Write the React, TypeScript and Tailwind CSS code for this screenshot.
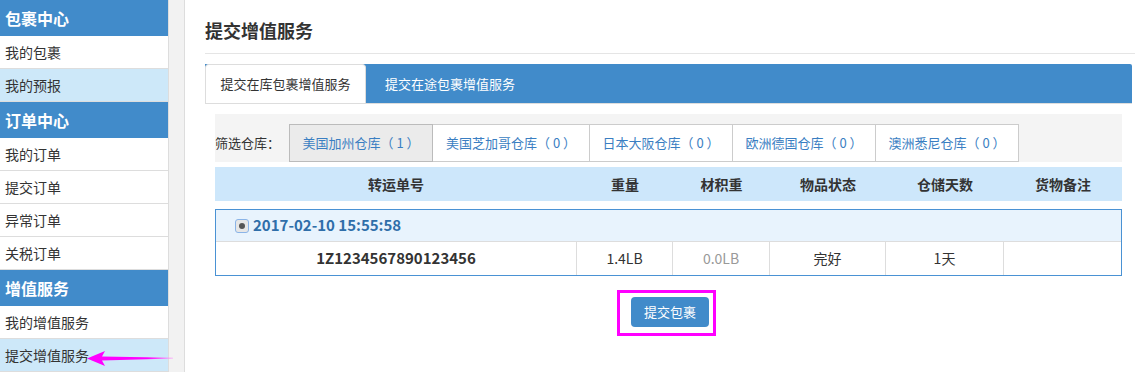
const font = "font-['Microsoft_YaHei','Noto_Sans_CJK_SC',sans-serif]";

const menu = [
  { title: "包裹中心", items: ["我的包裹", "我的预报"], active: "我的预报" },
  { title: "订单中心", items: ["我的订单", "提交订单", "异常订单", "关税订单"], active: "" },
  { title: "增值服务", items: ["我的增值服务", "提交增值服务"], active: "提交增值服务" },
];

const warehouses = [
  { name: "美国加州仓库（ 1 ）", w: "w-[144px]", active: true },
  { name: "美国芝加哥仓库（ 0 ）", w: "w-[158px]", active: false },
  { name: "日本大阪仓库（ 0 ）", w: "w-[144px]", active: false },
  { name: "欧洲德国仓库（ 0 ）", w: "w-[144px]", active: false },
  { name: "澳洲悉尼仓库（ 0 ）", w: "w-[144px]", active: false },
];

const columns = [
  { label: "转运单号", w: "w-[362px]" },
  { label: "重量", w: "w-[96px]" },
  { label: "材积重", w: "w-[97px]" },
  { label: "物品状态", w: "w-[116px]" },
  { label: "仓储天数", w: "w-[118px]" },
  { label: "货物备注", w: "w-[118px]" },
];

const Sidebar = () => (
  <div className="w-[168px] shrink-0 flex flex-col">
    {menu.map((group) => (
      <div key={group.title}>
        <div className="h-[36px] bg-[#418bca] text-white text-[16px] font-bold leading-[36px] pl-[5px]">
          {group.title}
        </div>
        {group.items.map((item) => (
          <div
            key={item}
            className={`h-[33px] leading-[32px] text-[14px] text-[#333] pl-[5px] border-b border-[#ddd] ${
              item === group.active ? "bg-[#cde8f9]" : "bg-white"
            }`}
          >
            {item}
          </div>
        ))}
      </div>
    ))}
  </div>
);

const App = () => {
  return (
    <div className={`relative flex h-[372px] w-[1135px] overflow-hidden bg-white ${font}`}>
      <Sidebar />
      <div className="w-[17px] shrink-0 bg-[#f2f2f2] border-l border-r border-[#ddd]" />

      <div className="flex-1 pl-[20px] pr-[3px]">
        <h2 className="text-[18px] font-bold text-[#333] h-[54px] leading-[60px] border-b border-[#e5e5e5] -mr-[3px]">
          提交增值服务
        </h2>

        <div className="mt-[10px] flex h-[40px] bg-[#418bca] rounded-tr-[2px] border-b border-[#ddd]">
          <div className="w-[161px] bg-white border border-b-0 border-[#ddd] rounded-t-[4px] text-[13px] text-[#333] flex items-center justify-center">
            提交在库包裹增值服务
          </div>
          <div className="w-[168px] text-[13px] text-white flex items-center justify-center">
            提交在途包裹增值服务
          </div>
        </div>

        <div className="px-[10px] pt-[10px]">
          <div className="h-[48px] bg-[#f4f4f4] flex items-end">
            <div className="h-[38px] w-[74px] text-[13px] text-[#333] flex items-center">筛选仓库：</div>
            {warehouses.map((w, i) => (
              <div
                key={w.name}
                className={`h-[38px] ${w.w} text-[13px] text-[#3a7ec2] flex items-center justify-center border whitespace-pre ${
                  i > 0 ? "-ml-px" : ""
                } ${w.active ? "bg-[#ebebeb] border-[#bbb] relative z-10" : "bg-white border-[#ccc]"}`}
              >
                {w.name}
              </div>
            ))}
          </div>

          <div className="mt-[5px] h-[34px] bg-[#cde7fb] flex">
            {columns.map((c) => (
              <div key={c.label} className={`${c.w} text-[14px] font-bold text-[#333] flex items-center justify-center`}>
                {c.label}
              </div>
            ))}
          </div>

          <div className="mt-[8px] border border-[#4a92d4]">
            <div className="h-[32px] bg-[#e8f3fd] border-b border-[#ddd] flex items-center pl-[19px] gap-[4px]">
              <div className="w-[14px] h-[14px] rounded-[3px] border border-[#8ab4e8] bg-[#e6e6e6] flex items-center justify-center">
                <div className="w-[6px] h-[6px] rounded-full bg-[#555]" />
              </div>
              <span className="text-[15px] font-bold text-[#2f6ea9]">2017-02-10 15:55:58</span>
            </div>
            <div className="h-[33px] flex text-[14px] text-[#333]">
              <div className="w-[361px] flex items-center justify-center font-bold text-[15px] border-r border-[#ddd]">
                1Z1234567890123456
              </div>
              <div className="w-[96px] flex items-center justify-center border-r border-[#ddd]">1.4LB</div>
              <div className="w-[97px] flex items-center justify-center border-r border-[#ddd] text-[#999]">0.0LB</div>
              <div className="w-[116px] flex items-center justify-center border-r border-[#ddd]">完好</div>
              <div className="w-[118px] flex items-center justify-center border-r border-[#ddd]">1天</div>
              <div className="flex-1" />
            </div>
          </div>

          <div className="mt-[14px] flex justify-center">
            <div className="border-[3px] border-[#f0f] pl-[11px] pr-[4px] pt-[4px] pb-[6px] ml-[-4px]">
              <button className="w-[78px] h-[30px] rounded-[4px] bg-[#418bca] text-white text-[13px]">提交包裹</button>
            </div>
          </div>
        </div>
      </div>

      <svg className="absolute left-[87px] top-[350px]" width="88" height="17" viewBox="0 0 88 17">
        <defs>
          <linearGradient id="arrowFade" x1="0" x2="1" y1="0" y2="0">
            <stop offset="0" stopColor="#f0f" />
            <stop offset="0.7" stopColor="#f0f" />
            <stop offset="1" stopColor="#f8a8f8" />
          </linearGradient>
        </defs>
        <polygon points="0,8.5 18,1 15,6.5 86,7.8 86,8.6 15,10.5 18,16" fill="url(#arrowFade)" />
      </svg>
    </div>
  );
};

export default App;
